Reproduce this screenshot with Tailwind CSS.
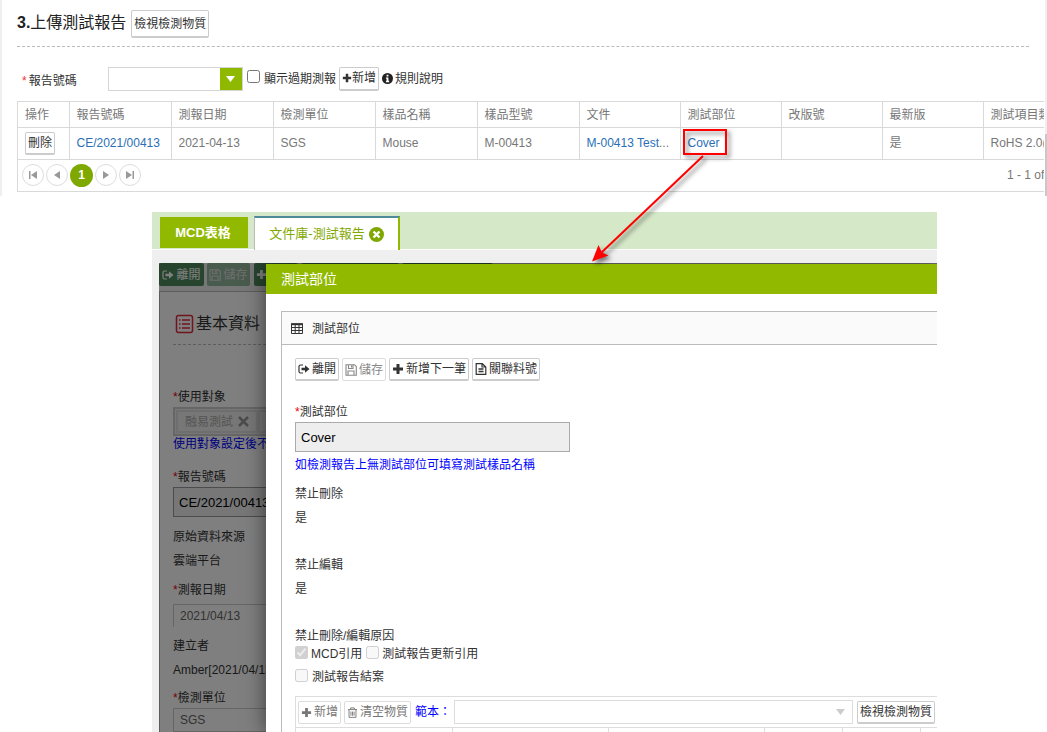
<!DOCTYPE html>
<html lang="zh-Hant">
<head>
<meta charset="utf-8">
<meta name="viewport" content="width=device-width, initial-scale=1">
<title>上傳測試報告</title>
<script src="https://cdn.jsdelivr.net/npm/@tailwindcss/browser@4"></script>
</head>
<body class="relative flex h-screen flex-col overflow-hidden bg-white font-['Liberation_Sans','Noto_Sans_CJK_TC',sans-serif] text-xs text-[#333]">
<svg class="hidden" aria-hidden="true">
  <symbol id="plus" viewBox="0 0 12 12"><path d="M4.500 1h3v3.500H11v3H7.500V11h-3V7.500H1v-3h3.500z" fill="currentColor"/></symbol>
  <symbol id="exit" viewBox="0 0 12 12"><path d="M5 2H2.500Q1 2 1 3.500v5Q1 10 2.500 10H5" fill="none" stroke="currentColor" stroke-width="1.200"/><path d="M3.500 4.700H7V2.200L11.500 6 7 9.800V7.300H3.500z" fill="currentColor"/></symbol>
  <symbol id="save" viewBox="0 0 12 12"><path d="M1 .7h8.500l1.800 1.800v8.800H1z M3.500 1v3.500h4.500V1 M3 11V7h6v4 M6.500 1.500v2" fill="none" stroke="currentColor" stroke-width="1.100"/></symbol>
  <symbol id="file" viewBox="0 0 12 12"><path d="M1.200.7h6.100l3.500 3.300v7.300H1.200z M7 .7v3.300h3.800" fill="none" stroke="currentColor" stroke-width="1.200"/><path d="M3.500 6h5M3.500 8.500h5" stroke="currentColor" stroke-width="1.300"/></symbol>
  <symbol id="trash" viewBox="0 0 12 12"><path d="M1 2.800h10 M4 2.500V1h4v1.500 M2.200 3v8.300h7.600V3 M4.300 5v4.500 M6 5v4.500 M7.700 5v4.500" fill="none" stroke="currentColor"/></symbol>
</svg>

<section class="mr-[3px] h-[196px] shrink-0 overflow-hidden border-l-2 border-[#efefef] pl-[15px]">
  <div class="mr-[15px] flex h-[47px] items-center gap-[5px] border-b border-dashed border-[#bbb]">
    <h1 class="text-base text-[#222]"><b>3.</b>上傳測試報告</h1>
    <button class="mt-[1px] h-7 rounded-xs border border-b-2 border-[#ccc] px-[2px] pt-[2px] text-[#333]">檢視檢測物質</button>
  </div>
  <div class="flex h-[54px] items-center pt-[9px]">
    <label for="rep" class="flex w-[91px] gap-[2px] pt-[5px] pl-[5px]"><span class="text-red-500">*</span>報告號碼</label>
    <div class="flex h-6 w-[135px] border border-[#d5d5d5]">
      <input id="rep" class="min-w-0 flex-1 outline-none">
      <button aria-label="展開" class="flex w-[22px] items-center justify-center bg-[#8fb800]"><svg width="10" height="6"><path d="M0 0h9L4.500 6z" fill="#fff"/></svg></button>
    </div>
    <label class="flex items-center gap-1"><input type="checkbox" class="mb-1 ml-1 size-[13px]">顯示過期測報</label>
    <button class="ml-[3px] flex h-6 items-center rounded-xs border border-b-2 border-[#ccc] px-[2px]"><svg class="size-[10px]"><use href="#plus"/></svg>新增</button>
    <a href="#rules" class="ml-[3px] flex items-center gap-[2px]"><svg width="11" height="11" viewBox="0 0 12 12"><circle cx="6" cy="6" r="6" fill="#222"/><path d="M5 2h2v1.800H5zM4.300 5H7v3.500h.8V10H4.300V8.500H5V6.300h-.7z" fill="#fff"/></svg>規則說明</a>
  </div>
  <div class="overflow-hidden border border-r-0 border-[#d9d9d9] text-[#777]">
    <table class="w-[1100px] table-fixed border-collapse">
      <colgroup><col class="w-[51px]"><col class="w-[102px]"><col class="w-[102px]"><col class="w-[102px]"><col class="w-[102px]"><col class="w-[102px]"><col class="w-[101px]"><col class="w-[101px]"><col class="w-[101px]"><col class="w-[101px]"><col></colgroup>
      <thead><tr class="h-[25px] border-b border-[#d9d9d9] text-left *:border-r *:border-[#d9d9d9] *:pt-[2px] *:pl-[7px] *:font-normal"><th>操作</th><th>報告號碼</th><th>測報日期</th><th>檢測單位</th><th>樣品名稱</th><th>樣品型號</th><th>文件</th><th>測試部位</th><th>改版號</th><th>最新版</th><th>測試項目類別</th></tr></thead>
      <tbody><tr class="h-8 border-b border-[#d9d9d9] *:border-r *:border-[#d9d9d9] *:py-0 *:pl-[7px]"><td><button class="h-[23px] rounded-xs border border-b-2 border-[#ccc] px-[2px] text-[#333]">刪除</button></td><td><a href="#r" class="text-[#2a6fb5]">CE/2021/00413</a></td><td>2021-04-13</td><td>SGS</td><td>Mouse</td><td>M-00413</td><td><a href="#f" class="text-[#2a6fb5]">M-00413 Test</a>...</td><td><a href="#part" class="text-[#2a6fb5]">Cover</a></td><td></td><td>是</td><td>RoHS 2.0(10)</td></tr></tbody>
    </table>
    <div class="flex h-[31px] items-center gap-[2px] pl-1">
      <button aria-label="第一頁" class="flex size-[22px] items-center justify-center rounded-full border border-[#ddd]"><svg width="8" height="8"><path d="M0 0h1.500v8H0zM8 0v8L2 4z" fill="#999"/></svg></button>
      <button aria-label="上一頁" class="flex size-[22px] items-center justify-center rounded-full border border-[#ddd]"><svg width="8" height="8"><path d="M7 0v8L1 4z" fill="#999"/></svg></button>
      <button class="size-[23px] rounded-full bg-[#7fa800] font-bold text-white">1</button>
      <button aria-label="下一頁" class="flex size-[22px] items-center justify-center rounded-full border border-[#ddd]"><svg width="8" height="8"><path d="M1 0v8l6-4z" fill="#999"/></svg></button>
      <button aria-label="最末頁" class="flex size-[22px] items-center justify-center rounded-full border border-[#ddd]"><svg width="8" height="8"><path d="M8 0H6.500v8H8zM0 0v8l6-4z" fill="#999"/></svg></button>
      <span class="-mr-2 ml-auto w-[45px] whitespace-nowrap">1 - 1 of 1</span>
    </div>
  </div>
</section>
<div class="absolute top-0 right-0 h-[196px] w-[2px] bg-[#efefef]"><div class="mt-[134px] h-[62px] bg-[#c8c8c8]"></div></div>

<main class="mt-4 mr-[110px] ml-[152px] flex min-h-0 flex-1 flex-col overflow-hidden bg-[#efefef]">
  <nav class="flex h-[38px] shrink-0 items-start gap-[6px] border-b border-white bg-[#d5e8c8] pt-1 pl-2 text-[13px]">
    <a href="#mcd" class="mt-[1px] flex h-[31px] w-[88px] items-center justify-center bg-[#91b900] pr-[2px] font-bold text-white">MCD表格</a>
    <a href="#lib" class="flex h-[34px] w-[146px] items-center justify-center gap-1 border-t-2 border-r-2 border-l border-t-[#4f8a9b] border-r-[#91b900] border-l-[#bbb] bg-white text-[#7fa800]">文件庫-測試報告<svg width="15" height="15" viewBox="0 0 15 15"><circle cx="7.500" cy="7.500" r="7.500" fill="#7fa800"/><path d="M4.500 4.500l6 6m0-6l-6 6" stroke="#fff" stroke-width="2.400"/></svg></a>
  </nav>
  <div class="relative mt-[13px] ml-[7px] min-h-0 flex-1 overflow-hidden bg-[#efefef]">
    <div class="flex h-[23px] gap-[3px] text-white">
      <button class="flex w-[45px] shrink-0 items-center justify-center gap-[2px] rounded-xs bg-[#4e8a5c]"><svg class="size-3"><use href="#exit"/></svg>離開</button>
      <button class="flex w-[43px] shrink-0 items-center justify-center gap-[2px] rounded-xs bg-[#92b69b] text-[#ddd]"><svg class="size-3"><use href="#save"/></svg>儲存</button>
      <button aria-label="新增" class="ml-[1px] flex w-[44px] shrink-0 items-center rounded-xs bg-[#4e8a5c] pl-[2px]"><svg class="size-[11px]"><use href="#plus"/></svg></button>
      <button aria-label="複製" class="w-[98px] rounded-xs bg-[#4e8a5c]"></button>
      <button aria-label="列印" class="w-[91px] rounded-xs bg-[#4e8a5c]"></button>
    </div>
    <div class="mt-[5px] h-full border-t border-l border-[#bbb] bg-white pt-[10px] pl-[13px] whitespace-nowrap">
      <h2 class="flex h-[43px] items-center gap-[1px] border-b border-dashed border-[#bbb] pt-[2px] pl-[2px] text-base"><svg width="20" height="20" viewBox="0 0 20 20" fill="none" stroke="#e0283c" stroke-width="1.500"><rect x="1.500" y="1.500" width="16" height="17" rx="2"/><path d="M4 6h1.500M4 10h1.500M4 14h1.500M7 6h8M7 10h8M7 14h8"/></svg>基本資料</h2>
      <div class="mt-[41px] pt-[1px] leading-5"><span class="text-red-600">*</span>使用對象</div>
      <div class="flex h-[29px] border-2 border-[#ccc] bg-[#eee] p-[1px] text-[#aaa]"><span class="flex w-[82px] items-center justify-center gap-[5px] border-2 border-[#ddd]">融易測試<svg width="11" height="11"><path d="M1 1l9 9m0-9l-9 9" stroke="#999" stroke-width="2.500"/></svg></span><span class="flex-1 border-2 border-[#ddd]"></span></div>
      <div class="leading-4 text-[#00f]">使用對象設定後不可修改</div>
      <label for="no" class="mt-[15px] block leading-5"><span class="text-red-600">*</span>報告號碼</label>
      <input id="no" readonly value="CE/2021/00413" class="block h-[30px] w-[275px] border border-[#999] bg-[#eee] px-[5px] text-[13px] text-black">
      <div class="mt-2 leading-6">原始資料來源</div>
      <div class="leading-6">雲端平台</div>
      <label for="date" class="mt-[7px] block leading-5"><span class="text-red-600">*</span>測報日期</label>
      <input id="date" readonly value="2021/04/13" class="mt-[4px] block h-[23px] w-[275px] border border-b-0 border-[#ccc] px-[6px] text-[#666]">
      <div class="mt-[7px] leading-6">建立者</div>
      <div class="leading-6">Amber[2021/04/13]</div>
      <label for="unit" class="mt-[6px] block leading-5"><span class="text-red-600">*</span>檢測單位</label>
      <input id="unit" readonly value="SGS" class="block h-6 w-[275px] border border-[#ccc] px-[6px] text-[#666]">
    </div>
    <div class="absolute inset-0 bg-black/50"></div>

    <div role="dialog" aria-labelledby="dt" class="absolute top-[1px] right-0 bottom-0 left-[107px] flex flex-col bg-white shadow-[0_0_20px_rgba(0,0,0,0.55)]">
      <h2 id="dt" class="flex h-[30px] shrink-0 items-center bg-[#91b900] pl-[15px] text-sm text-white">測試部位</h2>
      <div class="mt-[17px] ml-[15px] flex-1 border-t border-l border-[#bbb]">
        <h3 class="flex h-[33px] items-center gap-[9px] border-b border-[#bbb] bg-[#fafafa] pt-[1px] pl-[9px]"><svg width="12" height="11" viewBox="0 0 12 11" fill="none" stroke="#333"><path d="M.5 1h11v9.500H.5zM.5 4.500h11M.5 7.500h11M4.200 2v8.500M8 2v8.500"/><path d="M0 1.200h12" stroke-width="2"/></svg>測試部位</h3>
        <div class="pt-[13px] pl-[13px]">
          <div class="flex h-[23px] gap-[3px]">
            <button class="flex items-center gap-[2px] rounded-xs border border-b-2 border-[#ccc] px-[2px]"><svg class="size-3"><use href="#exit"/></svg>離開</button>
            <button disabled class="flex items-center gap-[2px] rounded-xs border border-[#ddd] px-[2px] text-[#888]"><svg class="size-3"><use href="#save"/></svg>儲存</button>
            <button class="flex items-center gap-[2px] rounded-xs border border-b-2 border-[#ccc] px-[2px]"><svg class="size-3"><use href="#plus"/></svg>新增下一筆</button>
            <button class="flex items-center gap-[2px] rounded-xs border border-b-2 border-[#ccc] px-[2px]"><svg class="size-3"><use href="#file"/></svg>關聯料號</button>
          </div>
          <label for="part" class="mt-[21px] block leading-5"><span class="text-red-600">*</span>測試部位</label>
          <input id="part" readonly value="Cover" class="block h-[30px] w-[275px] border border-[#aaa] bg-[#eee] px-[5px] text-[13px] text-black">
          <p class="mt-[1px] leading-6 text-[#00f]">如檢測報告上無測試部位可填寫測試樣品名稱</p>
          <p class="mt-[5px] leading-6">禁止刪除</p>
          <p class="leading-6">是</p>
          <p class="mt-[23px] leading-6">禁止編輯</p>
          <p class="leading-6">是</p>
          <p class="mt-[25px] leading-5">禁止刪除/編輯原因</p>
          <div class="flex h-4 items-center gap-1">
            <label class="flex items-center gap-[3px]"><input type="checkbox" checked disabled class="mb-1 size-[13px]">MCD引用</label>
            <label class="flex items-center gap-[3px]"><input type="checkbox" disabled class="mb-1 size-[13px]">測試報告更新引用</label>
          </div>
          <label class="mt-[5px] flex h-5 items-center gap-1"><input type="checkbox" disabled class="mb-1 size-[13px]">測試報告結案</label>
          <div class="mt-[9px] border-t border-l border-[#ddd]">
            <div class="flex h-[30px] items-center pr-[2px] pl-[2px]">
              <button disabled class="flex h-[23px] items-center gap-[2px] rounded-xs border border-[#ddd] px-[2px] text-[#777]"><svg class="size-[11px]"><use href="#plus"/></svg>新增</button>
              <button disabled class="ml-[3px] flex h-[23px] items-center gap-[2px] rounded-xs border border-[#ddd] px-[2px] text-[#777]"><svg class="size-[11px]"><use href="#trash"/></svg>清空物質</button>
              <label for="tpl" class="ml-1 w-9 whitespace-nowrap text-[#00f]">範本：</label>
              <div class="ml-[3px] flex h-6 min-w-0 flex-1 items-center border border-[#ddd] pr-[7px]">
                <select id="tpl" disabled class="h-full min-w-0 flex-1 appearance-none"></select>
                <svg width="9" height="6"><path d="M0 0h9L4.500 6z" fill="#ccc"/></svg>
              </div>
              <button class="ml-1 h-[23px] rounded-xs border border-b-2 border-[#ccc] px-[2px] text-[#333]">檢視檢測物質</button>
            </div>
            <table class="w-full table-fixed border-collapse border-t border-[#ddd]"><colgroup><col class="w-[156px]"><col class="w-[156px]"><col class="w-[156px]"><col class="w-[78px]"><col class="w-[78px]"><col></colgroup>
              <tbody><tr class="h-8 *:border-r *:border-[#ddd] *:last:border-r-0"><td></td><td></td><td></td><td></td><td></td><td></td></tr></tbody></table>
          </div>
        </div>
      </div>
    </div>
  </div>
</main>

<svg class="pointer-events-none absolute top-0 left-0 overflow-visible drop-shadow-[3px_3px_2px_rgba(0,0,0,0.5)]" width="740" height="270" aria-hidden="true">
  <rect x="684" y="130" width="42" height="24" fill="none" stroke="#f00" stroke-width="2"/>
  <path d="M703 156L601 253" stroke="#f00" stroke-width="2"/>
  <path d="M592 261.500L598.500 245l3.500 7.500 6.500 3z" fill="#f00"/>
</svg>
</body>
</html>
